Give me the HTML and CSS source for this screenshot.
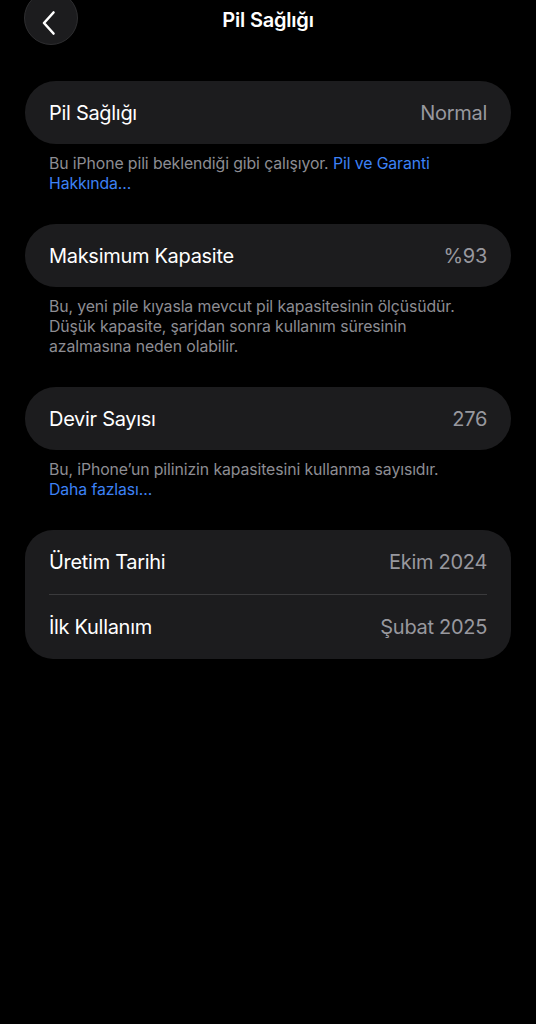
FILE: index.html
```html
<!DOCTYPE html>
<html lang="tr">
<head>
<meta charset="utf-8">
<link rel="stylesheet" href="styles.css">
</head>
<body>
<header class="nav">
  <button class="back" aria-label="Geri">
    <svg width="16" height="26" viewBox="0 0 16 26"><path d="M12.5 2.5 L3 13 L12.5 23.5" fill="none" stroke="#fff" stroke-width="2.6" stroke-linecap="round" stroke-linejoin="round"/></svg>
  </button>
  <h1 class="title">Pil Sağlığı</h1>
</header>
<main class="content">
  <section class="group">
    <div class="card">
      <div class="row"><span class="label">Pil Sağlığı</span><span class="value">Normal</span></div>
    </div>
    <p class="note">Bu iPhone pili beklendiği gibi çalışıyor. <a class="link">Pil ve Garanti Hakkında...</a></p>
  </section>
  <section class="group">
    <div class="card">
      <div class="row"><span class="label">Maksimum Kapasite</span><span class="value">%93</span></div>
    </div>
    <p class="note">Bu, yeni pile kıyasla mevcut pil kapasitesinin ölçüsüdür. Düşük kapasite, şarjdan sonra kullanım süresinin azalmasına neden olabilir.</p>
  </section>
  <section class="group">
    <div class="card">
      <div class="row"><span class="label">Devir Sayısı</span><span class="value">276</span></div>
    </div>
    <p class="note">Bu, iPhone’un pilinizin kapasitesini kullanma sayısıdır. <a class="link nowrap">Daha fazlası...</a></p>
  </section>
  <section class="group">
    <div class="card card-multi">
      <div class="row"><span class="label">Üretim Tarihi</span><span class="value">Ekim 2024</span></div>
      <div class="divider"></div>
      <div class="row"><span class="label">İlk Kullanım</span><span class="value">Şubat 2025</span></div>
    </div>
  </section>
</main>
</body>
</html>
```
FILE: styles.css
```css
html, body {
  margin: 0;
  padding: 0;
  background: #000;
  height: 100%;
}
body {
  font-family: Inter, "Noto Sans", "Liberation Sans", sans-serif;
  color: #fff;
  width: 536px;
  overflow: hidden;
}
.nav {
  position: relative;
  height: 81px;
}
.back {
  position: absolute;
  left: 24px;
  top: -9px;
  width: 54px;
  height: 54px;
  border-radius: 50%;
  background: #1c1c1e;
  border: 1px solid #2e2e30;
  display: flex;
  align-items: center;
  justify-content: center;
  padding: 9px 5px 0 0;
  box-sizing: border-box;
}
.title {
  margin: 0;
  text-align: center;
  font-size: 20px;
  font-weight: 600;
  line-height: 40px;
  letter-spacing: -0.2px;
}
.content {
  padding: 0 25px;
  display: flex;
  flex-direction: column;
  gap: 30px;
}
.card {
  background: #1c1c1e;
  border-radius: 31px;
  padding: 0 24px;
}
.card-multi {
  border-radius: 28px;
}
.row {
  height: 63px;
  display: flex;
  align-items: center;
  justify-content: space-between;
  font-size: 20px;
  letter-spacing: -0.3px;
}
.card-multi .row {
  height: 64px;
}
.label {
  color: #fff;
}
.value {
  color: #98989e;
}
.divider {
  height: 1px;
  background: #3a3a3c;
}
.note {
  margin: 10px 0 0;
  padding: 0 24px;
  font-size: 15.8px;
  line-height: 20px;
  color: #8d8d93;
  letter-spacing: -0.1px;
}
.link {
  color: #3d82f6;
}
.nowrap {
  white-space: nowrap;
}
```
